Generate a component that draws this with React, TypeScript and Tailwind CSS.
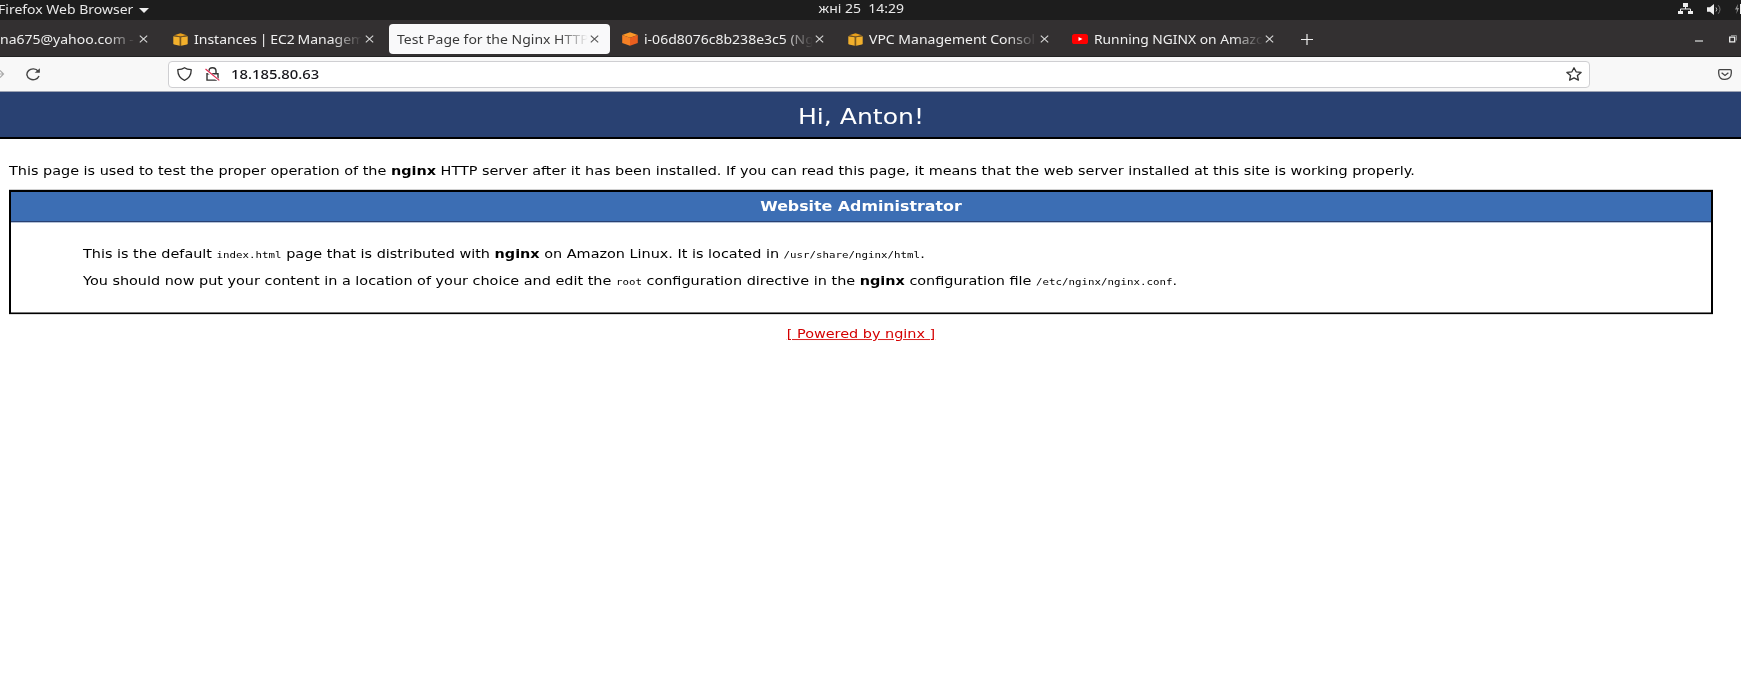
import type { ReactNode } from "react";

const fade = "[mask-image:linear-gradient(to_right,#000_calc(100%-30px),transparent)]";

function Close({ dark = false }: { dark?: boolean }) {
  return (
    <svg className="shrink-0" width="9" height="8" viewBox="0 0 9 8" fill="none" stroke={dark ? "#555" : "#d8d8d8"} strokeWidth="1.1">
      <path d="M.8.6 8.2 7.4M8.2.6.8 7.4" />
    </svg>
  );
}

function AwsIcon() {
  return (
    <svg className="shrink-0" width="15" height="13" viewBox="0 0 15 13">
      <path d="M.3 3.2 6.8 4.2v8.5L1 11.6.3 11zM14.7 3.2 8.1 4.2v8.5l5.9-1.1.7-.6z" fill="#f2b02c" />
      <path d="M1.2 2.2 7.5.3l6.3 1.9-6.3 1.3z" fill="#e9a01c" />
      <path d="M6.8 4.2 7.5 4l.6.2v8.5H6.8z" fill="#7b581c" />
      <path d="m1 2.7 6.5 1.2L14 2.7" stroke="#94671c" strokeWidth=".6" fill="none" />
    </svg>
  );
}

function CubeIcon() {
  return (
    <svg className="shrink-0" width="16" height="14" viewBox="0 0 16 14">
      <path d="M8 .2 15.8 3 8 5.7.2 3z" fill="#fb9727" />
      <path d="M.2 3 8 5.7v8.1L.2 11z" fill="#f58025" />
      <path d="M15.8 3 8 5.7v8.1l7.8-2.8z" fill="#ea5f1f" />
    </svg>
  );
}

function YoutubeIcon() {
  return (
    <svg className="shrink-0" width="16" height="10" viewBox="0 0 16 10">
      <rect width="16" height="10" rx="2.6" fill="#f00" />
      <path d="m6.5 2.9 4 2.1-4 2.1z" fill="#fff" />
    </svg>
  );
}

function Tab({ icon, className, labelClass, children }: { icon?: ReactNode; className: string; labelClass: string; children: ReactNode }) {
  return (
    <div className={`flex h-[30px] shrink-0 items-center ${className}`}>
      {icon}
      <div className={`shrink-0 overflow-hidden whitespace-nowrap pt-[2px] ${fade} ${labelClass}`}>
        <span className="inline-block scale-y-[.88]">{children}</span>
      </div>
    </div>
  );
}

function Code({ children }: { children: ReactNode }) {
  return <span className="font-['DejaVu_Sans_Mono',monospace] text-[10.8px]">{children}</span>;
}

export default function App() {
  return (
    <div className="h-[692px] w-[1741px] overflow-hidden bg-white font-['DejaVu_Sans',sans-serif] text-black">
      <div className="flex h-5 items-center bg-[#1d1d1d] font-['Noto_Sans',sans-serif] text-[14px] leading-5 text-[#e8e8e8]">
        <div className="flex w-[819px] items-center gap-[6px]">
          <span className="-ml-[2px] inline-block scale-y-[.86] whitespace-nowrap">Firefox Web Browser</span>
          <svg width="10" height="5" viewBox="0 0 10 5"><path d="M0 0h10L5 5z" fill="#eee" /></svg>
        </div>
        <span className="-mt-[2px] inline-block w-[859px] scale-y-[.84] whitespace-pre">жні 25  14:29</span>
        <svg className="-mt-[3px] ml-px" width="15" height="11" viewBox="0 0 15 11" fill="#eee">
          <path d="M5 0h5v4H5zM0 8h5v3H0zM10 8h5v3h-5z" />
          <path d="M7.5 4v2M2.5 8V6h10v2" fill="none" stroke="#eee" />
        </svg>
        <svg className="-mt-[2px] ml-[14px]" width="15" height="11" viewBox="0 0 15 11" fill="#eee">
          <path d="M0 3.3h3L7 0v11L3 7.8H0z" />
          <path d="M9 3.5q1.7 2 0 4" fill="none" stroke="#bbb" />
          <path d="M11.3 1.3q3.4 4 0 8.4" fill="none" stroke="#777" />
        </svg>
        <svg className="-mt-[2px] ml-[13px] shrink-0" width="6" height="12" viewBox="0 0 6 12">
          <path d="M3 1 0 6.6h2L1.3 11 4 5H2.3z" fill="#999" />
          <path d="M5 1h2v10H5z" fill="#eee" />
        </svg>
      </div>

      <div className="flex h-[37px] items-center border-b border-[#222] bg-[#333031] pt-[2px] font-['Noto_Sans',sans-serif] text-[14px] leading-[22px] text-[#f0f0f0]">
        <Tab className="w-[173px]" labelClass="mr-[5px] w-[136px]">na675@yahoo.com -</Tab>
        <div className="-ml-[34px] flex w-[34px]"><Close /></div>
        <Tab className="w-[192px]" icon={<AwsIcon />} labelClass="ml-[6px] mr-[4px] w-[168px] [word-spacing:-0.9px]">Instances | EC2 Managem</Tab>
        <div className="flex w-[24px]"><Close /></div>
        <div className="flex h-[30px] w-[221px] shrink-0 items-center rounded-[4px] bg-[#f9f9fa] pl-2 text-[#3a3a3a]">
          <div className={`w-[191px] overflow-hidden whitespace-nowrap pt-[2px] ${fade}`}>
            <span className="inline-block scale-y-[.88]">Test Page for the Nginx HTTP</span>
          </div>
          <span className="ml-[2px]"><Close dark /></span>
        </div>
        <Tab className="ml-3 w-[193px]" icon={<CubeIcon />} labelClass="ml-[6px] w-[169px]">i-06d8076c8b238e3c5 (Ng</Tab>
        <div className="flex w-[33px]"><Close /></div>
        <Tab className="w-[192px]" icon={<AwsIcon />} labelClass="ml-[6px] w-[168px] text-[14px]">VPC Management Consol</Tab>
        <div className="flex w-[32px]"><Close /></div>
        <Tab className="w-[193px]" icon={<YoutubeIcon />} labelClass="ml-[6px] w-[169px] text-[13.8px]">Running NGINX on Amazo</Tab>
        <div className="flex w-[36px]"><Close /></div>
        <svg width="12" height="11" viewBox="0 0 12 11" stroke="#eee" strokeWidth="1.2"><path d="M0 5.5h12M6 0v11" /></svg>
        <div className="ml-auto mr-1 flex items-center gap-[26px]">
          <div className="mt-1 h-[2px] w-2 bg-[#999]" />
          <svg width="8" height="8" viewBox="0 0 8 8" fill="none">
            <path d="M.7 2.2h5v4.6h-5z" stroke="#eee" strokeWidth="1.3" /><path d="M2 .5h5.5v5" stroke="#888" />
          </svg>
        </div>
      </div>

      <div className="flex h-[35px] items-center border-b border-[#9da3b3] bg-[#f8f8f8]">
        <svg width="26" height="10" viewBox="0 0 26 10" fill="none" stroke="#aaa" strokeWidth="1.2"><path d="M-4 5h7M0 1.5 3.5 5 0 8.5" /></svg>
        <svg width="15" height="13" viewBox="0 0 15 13" fill="none" stroke="#444" strokeWidth="1.4">
          <path d="M12.2 3.2A6.2 5.4 0 1 0 13 8" /><path d="M13.9.3v4.5H8.7z" fill="#444" stroke="none" />
        </svg>
        <div className="ml-[127px] flex h-[27px] w-[1422px] items-center rounded-[4px] border border-[#cfcfd2] bg-white pl-2">
          <svg width="15" height="14" viewBox="0 0 15 14" fill="none" stroke="#333" strokeWidth="1.3" strokeLinejoin="round">
            <path d="M7.5.7C5.7 2 3.5 2.5.8 2.7.7 8 2.6 11.3 7.5 13.3c4.9-2 6.8-5.3 6.7-10.6C11.5 2.5 9.3 2 7.5.7z" />
          </svg>
          <svg className="ml-[13px]" width="15" height="14" viewBox="0 0 15 14" fill="none" stroke="#333" strokeWidth="1.4">
            <path d="M4 6.5V4q0-3.3 3.5-3.3T11 4v2.5M2 6.7h11v6.4H2z" />
            <path d="M0 2.4 14 13.6" stroke="#fff" strokeWidth="2.6" /><path d="M.5 2 14.3 13.4" stroke="#e22850" strokeWidth="1.2" />
          </svg>
          <span className="ml-[11px] inline-block scale-y-[.84] font-['Noto_Sans',sans-serif] text-[14.8px] font-medium leading-5 text-[#15141a]">18.185.80.63</span>
          <svg className="ml-auto mr-[7px]" width="16" height="14" viewBox="0 0 16 14" fill="none" stroke="#333" strokeWidth="1.3" strokeLinejoin="round">
            <path d="m8 .8 2.1 4 5 .6-3.7 3.1 1 4.6L8 10.8l-4.4 2.3 1-4.6L.9 5.4l5-.6z" />
          </svg>
        </div>
        <svg className="ml-[128px]" width="14" height="11" viewBox="0 0 14 11" fill="none" stroke="#444" strokeWidth="1.3">
          <path d="M1.7.7h10.6q1 0 1 1v2.5Q13 10 7 10.3T.7 4.2V1.7q0-1 1-1z" /><path d="m3.6 3.7 3.4 2.7 3.4-2.7" />
        </svg>
      </div>

      <div className="flex h-[47px] items-center justify-center border-b-2 border-black bg-[#294172] pr-[19px] pt-[4px] text-[25.1px] leading-[30px] text-white">
        <span className="inline-block scale-y-[.84]">Hi, Anton!</span>
      </div>

      <div className="pl-[9px] pr-7 text-[14.42px]">
        <p className="mb-[9px] mt-[22px] h-5 origin-center scale-y-[.86] whitespace-nowrap leading-5">
          This page is used to test the proper operation of the <b>nginx</b> HTTP server after it has been installed. If you can read this page, it means that the web server installed at this site is working properly.
        </p>
        <div className="h-[124px] border-2 border-b border-black shadow-[inset_0_-1px_#777,0_1px_#ddd,0_-1px_#d0d0d0]">
          <h2 className="flex h-[30px] items-center justify-center border-b border-[#294172] bg-[#3c6eb4] pt-px text-[15.84px] font-bold leading-5 text-white shadow-[0_1px_#b4c2d8]">
            <span className="inline-block scale-y-[.84]">Website Administrator</span>
          </h2>
          <div className="whitespace-nowrap pl-[72px] pt-[22px] leading-5">
            <p className="h-5 scale-y-[.86]">This is the default <Code>index.html</Code> page that is distributed with <b>nginx</b> on Amazon Linux. It is located in <Code>/usr/share/nginx/html</Code>.</p>
            <p className="mt-[7px] h-5 scale-y-[.86]">You should now put your content in a location of your choice and edit the <Code>root</Code> configuration directive in the <b>nginx</b> configuration file <Code>/etc/nginx/nginx.conf</Code>.</p>
          </div>
        </div>
        <div className="mt-[10px] flex justify-center leading-5 text-[#d40000]">
          <a className="inline-block scale-y-[.86] underline">[ Powered by nginx ]</a>
        </div>
      </div>
    </div>
  );
}
